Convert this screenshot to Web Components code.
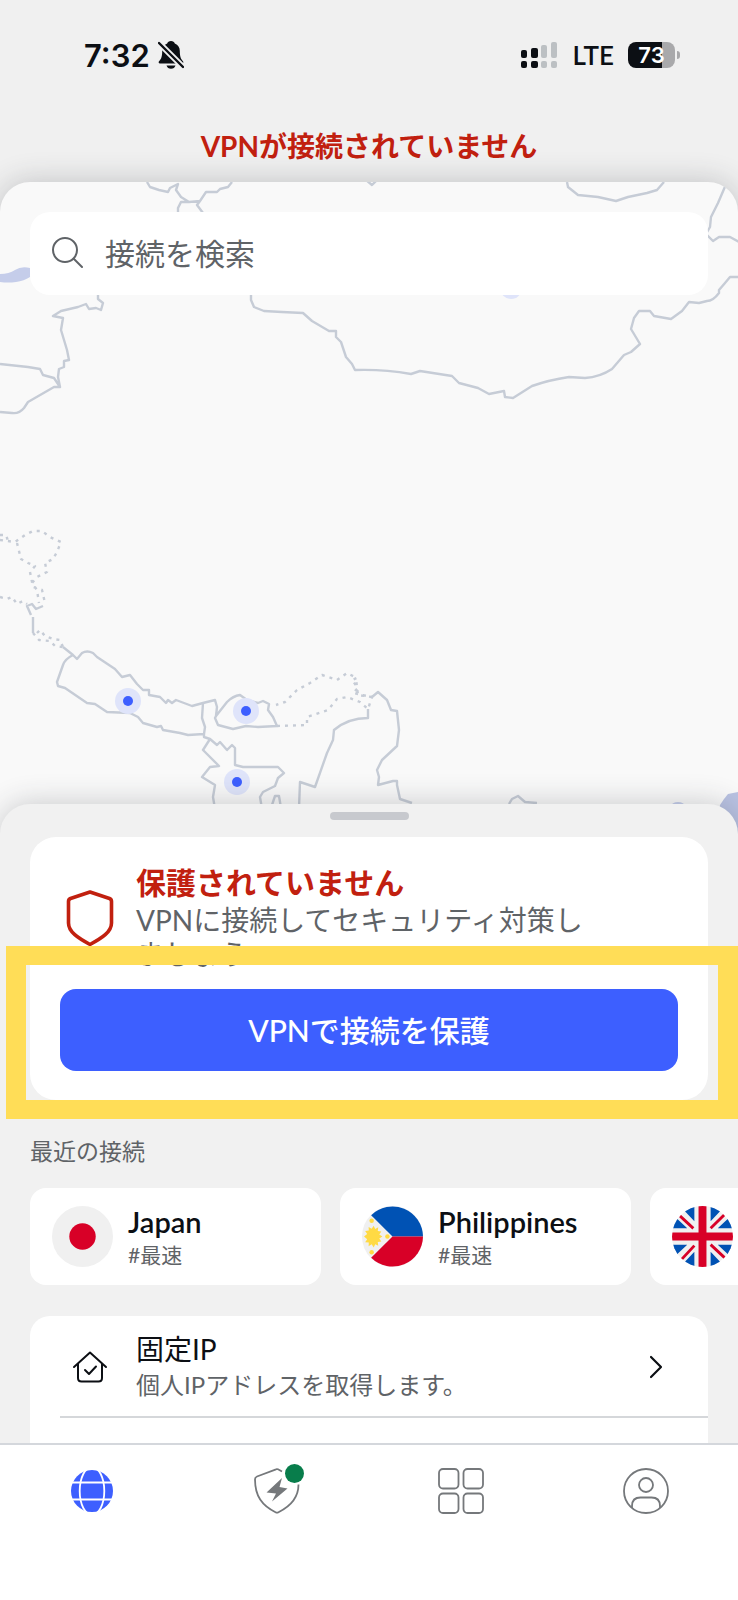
<!DOCTYPE html>
<html lang="ja">
<head>
<meta charset="utf-8">
<meta name="viewport" content="width=device-width, initial-scale=1">
<title>VPN</title>
<style>
  html, body {
    margin: 0;
    height: 100%;
  }

  body {
    --ink: #0c0f14;
    --muted: #5f6367;
    --danger: #c1200f;
    --accent: #3d5fff;
    --surface: #f1f1f1;
    color: var(--ink);
    font-family: Lato, "Noto Sans CJK JP", sans-serif;
  }
</style>
</head>
<body>
<vpn-app>
  <status-bar slot="header" time="7:32" network="LTE" battery="73"></status-bar>
  <span slot="title">VPNが接続されていません</span>

  <world-map slot="map">
    <search-box placeholder="接続を検索"></search-box>
  </world-map>

  <bottom-sheet slot="sheet">
    <protection-card>
      <span slot="title">保護されていません</span>
      <span slot="text">VPNに接続してセキュリティ対策しましょう</span>
      <focus-frame slot="action"><primary-button>VPNで接続を保護</primary-button></focus-frame>
    </protection-card>

    <recent-list heading="最近の接続">
      <recent-item flag="jp" name="Japan">#最速</recent-item>
      <recent-item flag="ph" name="Philippines">#最速</recent-item>
      <recent-item flag="gb" name=""></recent-item>
    </recent-list>

    <settings-group>
      <settings-row>
        <span slot="title">固定IP</span>
        個人IPアドレスを取得します。
      </settings-row>
    </settings-group>
  </bottom-sheet>

  <tab-bar slot="tabs">
    <tab-item icon="globe" label="VPN" active></tab-item>
    <tab-item icon="shield" label="脅威対策" badge></tab-item>
    <tab-item icon="grid" label="サービス"></tab-item>
    <tab-item icon="user" label="プロフィール"></tab-item>
  </tab-bar>
</vpn-app>

<script>
(function () {
  'use strict';

  const icons = {
    search: `
      <svg viewBox="0 0 32 32" width="32" height="32" fill="none" stroke="currentColor" stroke-width="2" stroke-linecap="round">
        <circle cx="14" cy="13" r="12"/><path d="M23 22l8 8"/>
      </svg>`,
    bell: `
      <svg viewBox="0 0 26 28" width="26" height="28" fill="currentColor">
        <path d="M13 0c2 0 3.400 1 3.800 2.500 3.300 1.300 5 4 5 7.500 0 5.500 1 8 3 10 1 1 .6 2.500-.8 2.500H2C.6 22.500.2 21 1.200 20 3.200 18 4.200 15.500 4.200 10c0-3.500 1.700-6.200 5-7.500C9.600 1 11 0 13 0z"/>
        <path d="M8.500 24.500h9c-.6 2-2.200 3.300-4.500 3.300s-3.900-1.300-4.500-3.300z"/>
        <path d="M-1 0L27 28" stroke="#f0f0f0" stroke-width="6"/>
        <path d="M1 2L25 26" stroke="currentColor" stroke-width="2.400" stroke-linecap="round"/>
      </svg>`,
    signal: `
      <svg viewBox="0 0 37 26" width="37" height="26" fill="currentColor">
        <rect x="0" y="8" width="6" height="8" rx="2"/><rect x="10" y="6" width="7" height="10" rx="2"/>
        <rect x="0" y="19" width="6" height="7" rx="2"/><rect x="10" y="19" width="7" height="7" rx="2"/>
        <g fill="#bcc0c3">
          <rect x="20" y="3" width="6" height="13" rx="2"/><rect x="30" y="0" width="6" height="16" rx="2"/>
          <rect x="20" y="19" width="6" height="7" rx="2"/><rect x="30" y="19" width="6" height="7" rx="2"/>
        </g>
      </svg>`,
    alert: `
      <svg viewBox="0 0 60 60" width="60" height="60" fill="none" stroke="currentColor" stroke-width="3.600" stroke-linejoin="round">
        <path d="M30 4L49.500 10.500Q51.500 11.300 51.500 13.500V35C51.500 44 42 50 30 56.500 18 50 8.500 44 8.500 35V13.500Q8.500 11.300 10.500 10.500Z"/>
      </svg>`,
    home: `
      <svg viewBox="0 0 60 40" width="60" height="40" fill="none" stroke="currentColor" stroke-width="2" stroke-linecap="round" stroke-linejoin="round">
        <path d="M14 20L30 5.500 46 20M18 17V31q0 3.500 3.500 3.500h17q3.500 0 3.500-3.500V17M25 23l4 4 7-7.500"/>
      </svg>`,
    chevron: `
      <svg viewBox="0 0 14 24" width="14" height="24" fill="none" stroke="currentColor" stroke-width="2.200" stroke-linecap="round" stroke-linejoin="round">
        <path d="M2 2l10 10L2 22"/>
      </svg>`,
    globe: `
      <svg viewBox="0 0 48 48" width="48" height="48" fill="none" stroke="#fff" stroke-width="1.800">
        <circle cx="24" cy="24" r="21" fill="currentColor" stroke="none"/>
        <ellipse cx="24" cy="24" rx="12.300" ry="24"/>
        <path d="M0 15.500h48M0 32.500h48"/>
      </svg>`,
    shield: `
      <svg viewBox="0 0 48 48" width="48" height="48" fill="none" stroke="currentColor" stroke-width="1.800">
        <path d="M29 4.500L25 2.300Q24 1.800 23 2.300L4 9.500Q2 10.300 2 12.500C2 29 9 38.500 22.500 45.200Q24 46 25.500 45.200C37 39.500 45.500 31 45.500 17.500"/>
        <path fill="currentColor" stroke="none" d="M29 11L13.500 25.500l9.500 1-4 8L34.500 21.500 26.500 20z"/>
      </svg>`,
    grid: `
      <svg viewBox="0 0 48 48" width="48" height="48" fill="none" stroke="currentColor" stroke-width="1.800">
        <rect x="2" y="2" width="19.500" height="19.500" rx="4"/><rect x="26.500" y="2" width="19.500" height="19.500" rx="4"/>
        <rect x="2" y="26.500" width="19.500" height="19.500" rx="4"/><rect x="26.500" y="26.500" width="19.500" height="19.500" rx="4"/>
      </svg>`,
    user: `
      <svg viewBox="0 0 48 48" width="48" height="48" fill="none" stroke="currentColor" stroke-width="1.800">
        <circle cx="24" cy="24" r="22"/><circle cx="24" cy="18" r="7"/>
        <path d="M10 41v-2q0-8.500 8.500-8.500h11q8.500 0 8.500 8.500v2"/>
      </svg>`
  };

  const flags = {
    jp: `<circle cx="30" cy="30" r="30" fill="#f0f0f0"/><circle cx="30" cy="30" r="13" fill="#d80027"/>`,
    ph: `
      <circle cx="30" cy="30" r="30" fill="#f0f0f0"/>
      <path fill="#0052b4" d="M9 9A30 30 0 0 1 60 30H30z"/>
      <path fill="#d80027" d="M9 51A30 30 0 0 0 60 30H30z"/>
      <path fill="#ffda44" d="M20 30l-3 2 2 3-3.500.5.500 3.500-3-1.500-1.500 3.200-2-3-3 1.800.2-3.500-3.600-.4 2-3L2 30l3.100-2.500-2-3 3.600-.4-.2-3.500 3 1.800 2-3L13 22.600 16 21l-.5 3.500 3.500.5-2 3z"/>
      <circle cx="9.500" cy="14.500" r="2.200" fill="#ffda44"/><circle cx="9.500" cy="45.500" r="2.200" fill="#ffda44"/><circle cx="25" cy="30" r="2.200" fill="#ffda44"/>`,
    gb: `
      <clipPath id="round"><circle cx="30" cy="30" r="30"/></clipPath>
      <g clip-path="url(#round)">
        <path fill="#f0f0f0" d="M0 0h60v60H0z"/>
        <path fill="#0052b4" d="M-3 5L15 22H-3zM5-3L22 15V-3zM55-3L38 15V-3zM63 5L45 22H63zM-3 55L15 38H-3zM5 63L22 45V63zM55 63L38 45V63zM63 55L45 38H63z"/>
        <path stroke="#d80027" stroke-width="2.800" d="M7 9L21 22M52 8L38 22M9 53L22 39M53 52L38 38"/>
        <path stroke="#d80027" stroke-width="7.800" d="M30 0V60M0 30H60"/>
      </g>`
  };

  class BaseElement extends HTMLElement {
    constructor() {
      super();
      this.attachShadow({ mode: 'open' });
    }

    connectedCallback() {
      this.shadowRoot.innerHTML = `
        <style>
          :host { display: block; box-sizing: border-box; }
          * { box-sizing: border-box; }
          svg { display: block; flex: none; }
          button { font: inherit; color: inherit; border: 0; margin: 0; text-align: left; cursor: pointer; }
          ${this.css()}
        </style>
        ${this.html()}
      `;
    }

    attr(name) {
      return this.getAttribute(name) || '';
    }

    css() {
      return '';
    }

    html() {
      return '<slot></slot>';
    }
  }

  class VpnApp extends BaseElement {
    css() {
      return `
        :host {
          display: flex;
          flex-direction: column;
          height: 100vh;
          overflow: hidden;
          background: #f0f0f0;
        }
        h1 {
          margin: 51px 0 16px;
          font-size: 28px;
          line-height: 40px;
          font-weight: 700;
          text-align: center;
          color: var(--danger);
        }
      `;
    }

    html() {
      return `
        <header><slot name="header"></slot><h1><slot name="title"></slot></h1></header>
        <slot name="map"></slot>
        <slot name="sheet"></slot>
        <slot name="tabs"></slot>
      `;
    }
  }

  class StatusBar extends BaseElement {
    css() {
      return `
        :host {
          display: flex;
          justify-content: space-between;
          align-items: center;
          height: 40px;
          margin-top: 35px;
          padding: 0 58px 0 84px;
          font-family: Inter, sans-serif;
        }
        div { display: flex; align-items: center; }
        .time { gap: 8px; font-size: 31px; font-weight: 600; }
        .radio { gap: 14px; }
        .network { font-family: Lato, sans-serif; font-size: 26px; font-weight: 600; }
        .battery { gap: 2px; }
        .level {
          width: 47px;
          height: 26px;
          justify-content: center;
          border-radius: 8px;
          background: linear-gradient(90deg, var(--ink) ${this.attr('battery')}%, #a9a9ab 0);
          color: #fff;
          font-size: 22px;
          font-weight: 600;
        }
        .tip { width: 3px; height: 8px; border-radius: 0 4px 4px 0; background: #a9a9ab; }
      `;
    }

    html() {
      return `
        <div class="time"><span>${this.attr('time')}</span>${icons.bell}</div>
        <div class="radio">
          ${icons.signal}<span class="network">${this.attr('network')}</span>
          <div class="battery"><div class="level">${this.attr('battery')}</div><div class="tip"></div></div>
        </div>
      `;
    }
  }

  class WorldMap extends BaseElement {
    css() {
      return `
        :host {
          position: relative;
          flex: none;
          height: 652px;
          padding: 30px;
          overflow: hidden;
          border-radius: 30px 30px 0 0;
          background: #f9f9f9;
          box-shadow: 0 0 30px rgba(40, 45, 55, .24);
        }
        .map { position: absolute; left: 0; top: 0; width: 100%; height: 100%; }
        .pin { fill: var(--accent); }
        .halo { fill: #dfe4fa; }
      `;
    }

    html() {
      const pins = [[128, 701], [246, 711], [237, 782]];
      return `
        <svg class="map" viewBox="0 182 738 652" preserveAspectRatio="xMidYMin slice" fill="none" stroke="#c6ccd6" stroke-width="2.400" stroke-linejoin="round">
          <g fill="#c5cdea" stroke="none">
            <path d="M0 274q9 0 15-4t15-2v9q-6 4-14 5t-16 0z"/>
            <path fill="#b9c2e2" d="M714 834L720 805l4-6 4-5 10-2v42z"/>
            <ellipse cx="678" cy="806" rx="7" ry="4"/>
            <circle class="halo" cx="511" cy="288" r="11"/>
          </g>
          <path d="M147 182l3 5 9 3 9 2 2-4 8-4-2 6 5 7 8 5 11-1 6-9h11l3-3 8-2 4-5M189 202h-8l-3 6v5M200 201l-3 4 6 8M366 180l6 5 5-5"/>
          <path d="M567 182l1 5 10 8 20 2 18 4 12-4 19-4 10-3 7-8M727 182l-9 21-7 14-1 10-4 7 7 7 6-4h11l9 5"/>
          <path d="M738 277h-8l-5 6-6 7v3q-6 8-12 8l-8 2-10-1-7 9-11 8-17-3-4-5h-11l-5 7-3 11 9 15-9 8-7 3-12 14q-12 8-27 9l-16-1q-20 3-37 9l-19 12-8-1-1-6-15 3-11-6-19-5-7-7-32-5-9 3q-28-5-56-4l-3-6-6-7-5-15-5-5v-6h-7l-17-10-9-8-21-1-18-1-10-4-3-7v-10"/>
          <path d="M98 290v9l5 4-2 7-5-2-7 1-3-5-8 3-17 4-8 5 10 2-2 12 6 20 2 10-5 1v6l-5 2-1 8 2 10-6 0-26 15-4 6q-5 6-12 5l-12-1M0 364l28 3 12 2 3 6 11 3 6 9"/>
          <path d="M31 615l-4-9 5-2 4 5 7-3M33 617v16M63 647l10 8 4 4 5-6q5-3 11 0l4 4 18 12 7 8 8-2 7 9 6 6h6v5l11 2 6 6 2-3 4 3 4-3 16 6 11-3 12-3 2 7-1 9 11-14q6-6 13-7l7 5 11 3 5-2 6 3-1 6 5 7 4 9-19 1-12-1-13 3-15-4-3-7 1-2"/>
          <path d="M73 655q-8 4-10 10l-6 17 1 4 7 2 22 15 8 1 12 8 23 1 8 4 5 6 14 4 4-1 2 4 17 3 8 2 16-1 0 3 6 2-7 11 16 16-9 1-8 10 13 8-2 12 2 12M204 734l1-7-3-9 1-15M210 739l7 6 3-3 7 8 5-5 3 3v17l8 2h35l6 6-6 5-3 8-12 6-3 5 2 12M271 808l4-12h4l2 12"/>
          <path d="M299 808l1-26 15 5 12-34 6-13 1-10q14-12 34-12v-9M372 697l6-5 9 8 4 10 6 1 2 19-2 16-15 14-5 10 2 7-1 8 15-4h4l0 4 3 14 12 4M509 804l3-5 6-3 7 6 12 1"/>
          <g stroke-dasharray="3 5">
            <path d="M0 535h6l2 6M0 540l15 2 10-7 8-4h9l8 6 11 5-4 10-4 7-8 4 2 9-10 5-5 6 5 7 2 13M17 543l4 16 7 4 7 3-5 6 3 15 9 3 3 13M0 597l7 2 5-2 5 7 6-3 4 3"/>
            <path d="M33 633l6 7 11 1 5 5 8 1M37 633l3-3 5 6 8 3 7 1 3 7"/>
            <path d="M277 726l30-1v-8l21-7 9-11 10-2 13 5 8 7 4-12-19-4 5-5-6-8 5-2-10-5-10 7-15-5-12 8-13 7-12 12-9 3M372 697l-14-2-2-16"/>
          </g>
          <g stroke="none">
            ${pins.map(([x, y]) => `<circle class="halo" cx="${x}" cy="${y}" r="13"/><circle class="pin" cx="${x}" cy="${y}" r="5"/>`).join('')}
          </g>
        </svg>
        <slot></slot>
      `;
    }
  }

  class SearchBox extends BaseElement {
    css() {
      return `
        :host { position: relative; color: var(--muted); }
        label {
          display: flex;
          align-items: center;
          gap: 22px;
          height: 83px;
          padding: 0 21px 2px;
          border-radius: 20px;
          background: #fff;
        }
        input {
          flex: 1;
          min-width: 0;
          padding: 0;
          border: 0;
          outline: 0;
          background: none;
          font: inherit;
          font-size: 30px;
          line-height: 44px;
          color: inherit;
        }
        input::placeholder { color: inherit; opacity: 1; }
      `;
    }

    html() {
      const text = this.attr('placeholder');
      return `<label>${icons.search}<input type="search" aria-label="${text}" placeholder="${text}"></label>`;
    }
  }

  class BottomSheet extends BaseElement {
    css() {
      return `
        :host {
          position: relative;
          display: flex;
          flex: 1;
          flex-direction: column;
          min-height: 0;
          margin-top: -30px;
          padding: 8px 30px 0;
          border-radius: 30px 30px 0 0;
          background: var(--surface);
          box-shadow: 0 0 30px rgba(40, 45, 55, .24);
        }
        .handle {
          flex: none;
          width: 79px;
          height: 8px;
          margin: 0 auto 17px;
          border-radius: 4px;
          background: #c7c9ce;
        }
      `;
    }

    html() {
      return '<div class="handle"></div><slot></slot>';
    }
  }

  class ProtectionCard extends BaseElement {
    css() {
      return `
        :host {
          flex: none;
          padding: 27px 30px 29px;
          border-radius: 26px;
          background: #fff;
        }
        .info {
          display: flex;
          align-items: center;
          gap: 16px;
          margin-bottom: 18px;
          padding-right: 72px;
          color: var(--danger);
        }
        h2 { margin: 0 0 3px; font-size: 30px; line-height: 36px; font-weight: 700; }
        p { margin: 0; font-size: 28px; line-height: 34px; color: var(--muted); }
      `;
    }

    html() {
      return `
        <div class="info">
          ${icons.alert}
          <div><h2><slot name="title"></slot></h2><p><slot name="text"></slot></p></div>
        </div>
        <slot name="action"></slot>
      `;
    }
  }

  // Thick marker drawn around the main action
  class FocusFrame extends BaseElement {
    css() {
      return `
        :host { position: relative; }
        .frame {
          position: absolute;
          inset: -43px -60px -48px -54px;
          border: 19px solid #ffdd57;
          border-inline-width: 20px;
          pointer-events: none;
        }
      `;
    }

    html() {
      return '<div class="frame"></div><slot></slot>';
    }
  }

  class PrimaryButton extends BaseElement {
    css() {
      return `
        button {
          display: block;
          width: 100%;
          height: 82px;
          padding: 0 0 3px;
          border-radius: 16px;
          background: var(--accent);
          color: #fff;
          font-size: 30px;
          font-weight: 500;
          text-align: center;
        }
      `;
    }

    html() {
      return '<button type="button"><slot></slot></button>';
    }
  }

  class RecentList extends BaseElement {
    css() {
      return `
        :host { flex: none; margin: 36px -30px 0 0; overflow: hidden; }
        h3 { margin: 0 0 22px; font-size: 23px; line-height: 30px; font-weight: 400; color: var(--muted); }
        .items { display: flex; gap: 19px; }
      `;
    }

    html() {
      return `<h3>${this.attr('heading')}</h3><div class="items"><slot></slot></div>`;
    }
  }

  class RecentItem extends BaseElement {
    css() {
      return `
        :host { flex: none; width: 291px; }
        button {
          display: flex;
          align-items: center;
          gap: 15px;
          width: 100%;
          height: 97px;
          padding: 0 22px;
          border-radius: 16px;
          background: #fff;
        }
        strong, small { display: block; }
        strong { font-size: 29px; line-height: 36px; font-weight: 600; }
        small { font-size: 21px; line-height: 30px; color: var(--muted); }
      `;
    }

    html() {
      return `
        <button type="button" aria-label="${this.attr('name') || 'United Kingdom'}">
          <svg viewBox="0 0 60 60" width="61" height="61">${flags[this.attr('flag')]}</svg>
          <span><strong>${this.attr('name')}</strong><small><slot></slot></small></span>
        </button>
      `;
    }
  }

  class SettingsGroup extends BaseElement {
    css() {
      return `
        :host {
          flex: 1;
          min-height: 0;
          margin-top: 31px;
          padding-left: 30px;
          overflow: hidden;
          border-radius: 20px 20px 0 0;
          background: #fff;
        }
      `;
    }
  }

  class SettingsRow extends BaseElement {
    css() {
      return `
        :host { border-bottom: 2px solid #d5d7da; }
        button {
          display: flex;
          align-items: center;
          gap: 16px;
          width: 100%;
          padding: 15px 45px 13px 0;
          background: none;
        }
        .text { flex: 1; }
        strong, small { display: block; }
        strong { font-size: 28px; line-height: 36px; font-weight: 400; }
        small { font-size: 24px; line-height: 36px; color: var(--muted); }
      `;
    }

    html() {
      return `
        <button type="button">
          ${icons.home}
          <span class="text"><strong><slot name="title"></slot></strong><small><slot></slot></small></span>
          ${icons.chevron}
        </button>
      `;
    }
  }

  class TabBar extends BaseElement {
    css() {
      return `
        :host {
          position: relative;
          flex: none;
          height: 157px;
          border-top: 2px solid #d4d7dc;
          background: #fff;
        }
        nav { display: flex; }
      `;
    }

    html() {
      return '<nav><slot></slot></nav>';
    }
  }

  class TabItem extends BaseElement {
    css() {
      return `
        :host { flex: 1; color: #75787b; }
        :host([active]) { color: var(--accent); }
        a { display: flex; justify-content: center; padding: 22px 0; color: inherit; }
        .icon { position: relative; }
        .badge {
          position: absolute;
          top: -3px;
          right: -3px;
          width: 19px;
          height: 19px;
          border-radius: 50%;
          background: #087d4b;
        }
      `;
    }

    html() {
      const badge = this.hasAttribute('badge') ? '<span class="badge"></span>' : '';
      return `<a href="#" aria-label="${this.attr('label')}"><span class="icon">${icons[this.attr('icon')]}${badge}</span></a>`;
    }
  }

  window.customElements.define('vpn-app', VpnApp);
  window.customElements.define('status-bar', StatusBar);
  window.customElements.define('world-map', WorldMap);
  window.customElements.define('search-box', SearchBox);
  window.customElements.define('bottom-sheet', BottomSheet);
  window.customElements.define('protection-card', ProtectionCard);
  window.customElements.define('focus-frame', FocusFrame);
  window.customElements.define('primary-button', PrimaryButton);
  window.customElements.define('recent-list', RecentList);
  window.customElements.define('recent-item', RecentItem);
  window.customElements.define('settings-group', SettingsGroup);
  window.customElements.define('settings-row', SettingsRow);
  window.customElements.define('tab-bar', TabBar);
  window.customElements.define('tab-item', TabItem);
})();
</script>
</body>
</html>
